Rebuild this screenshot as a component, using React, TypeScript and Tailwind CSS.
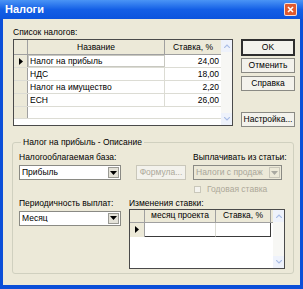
import React from "react";

const FONT = { fontFamily: '"Liberation Sans", Arial, sans-serif' };

// tiny XP-ish arrow used in dropdown buttons
function DropArrow({ disabled }: { disabled?: boolean }) {
  return (
    <svg width="7" height="4" viewBox="0 0 7 4">
      <path d="M0 0h7L3.5 4z" fill={disabled ? "#a8a8a0" : "#000"} />
    </svg>
  );
}

function Select({ value, disabled, width }: { value: string; disabled?: boolean; width: string }) {
  return (
    <div
      className={`flex items-center h-[15px] border border-[#8a8a84] ${width} ${
        disabled ? "bg-[#ece9d8] text-[#a8a69a]" : "bg-white text-black"
      }`}
    >
      <span className="flex-1 pl-[2px] leading-none truncate">{value}</span>
      <div
        className={`w-[11px] h-[11px] mr-[1px] flex items-center justify-center border ${
          disabled ? "border-[#c9c7ba] bg-[#ece9d8]" : "border-[#9a9a94] bg-[#e4e2d8]"
        }`}
      >
        <DropArrow disabled={disabled} />
      </div>
    </div>
  );
}

function Button({ label, primary, disabled, className }: { label: string; primary?: boolean; disabled?: boolean; className?: string }) {
  return (
    <div
      className={`flex items-center justify-center h-[15px] bg-[#f3f2ec] ${
        primary ? "border-2 border-[#2e2e2e]" : "border border-[#8a8a84]"
      } ${disabled ? "text-[#aca899] border-[#c9c7ba]" : "text-black"} ${className || ""}`}
    >
      {label}
    </div>
  );
}

function Scrollbar({ height }: { height: string }) {
  return (
    <div className={`w-[11px] ${height} bg-[#f7f7f4] flex flex-col justify-between`}>
      <div className="h-[12px] bg-[#eef2fb] flex items-center justify-center">
        <svg width="6" height="4" viewBox="0 0 6 4">
          <path d="M0 4L3 1L6 4" fill="none" stroke="#a9bde6" strokeWidth="1.2" />
        </svg>
      </div>
      <div className="h-[12px] bg-[#eef2fb] flex items-center justify-center">
        <svg width="6" height="4" viewBox="0 0 6 4">
          <path d="M0 0L3 3L6 0" fill="none" stroke="#a9bde6" strokeWidth="1.2" />
        </svg>
      </div>
    </div>
  );
}

function RowArrow() {
  return (
    <svg width="4" height="7" viewBox="0 0 4 7">
      <path d="M0 0L4 3.5L0 7z" fill="#000" />
    </svg>
  );
}

const taxes = [
  { name: "Налог на прибыль", rate: "24,00" },
  { name: "НДС", rate: "18,00" },
  { name: "Налог на имущество", rate: "2,20" },
  { name: "ЕСН", rate: "26,00" },
];

export default function App() {
  return (
    <div
      className="w-[303px] h-[289px] bg-[#0b4fd8] flex flex-col text-[8.5px] text-black overflow-hidden"
      style={FONT}
    >
      {/* Title bar */}
      <div className="h-[19px] flex items-center justify-between pl-[5px] pr-[6px] bg-gradient-to-b from-[#4a94f5] via-[#145fe6] to-[#0c54de]">
        <span className="text-white font-bold text-[11px]">Налоги</span>
        <div className="w-[13px] h-[13px] rounded-[2px] bg-[#e0592e] border border-white/80 flex items-center justify-center">
          <svg width="7" height="7" viewBox="0 0 7 7">
            <path d="M1 1L6 6M6 1L1 6" stroke="#fff" strokeWidth="1.6" />
          </svg>
        </div>
      </div>

      {/* Body */}
      <div className="flex-1 mx-[3px] mb-[4px] bg-[#ece9d8] pl-[9px] pt-[7px] flex flex-col">
        <div className="flex">
          {/* Tax list */}
          <div className="flex flex-col">
            <div className="h-[12px] leading-[12px] ml-[1px] mb-[1px]">Список налогов:</div>
            <div className="ml-[1px] flex w-[220px] h-[87px] border border-[#4a4a4a] bg-white">
              <div className="flex-1 flex flex-col">
                <div className="flex h-[15px] bg-[#ece9d8] border-b border-[#a0a0a0]">
                  <div className="w-[14px] border-r border-[#a0a0a0]" />
                  <div className="w-[137px] border-r border-[#a0a0a0] flex items-center justify-center">Название</div>
                  <div className="flex-1 flex items-center justify-center">Ставка, %</div>
                </div>
                {taxes.map((t, i) => (
                  <div key={t.name} className="flex h-[13px] border-b border-[#dcdcd4]">
                    <div className="w-[14px] bg-[#ece9d8] border-r border-[#a0a0a0] flex items-center justify-center">
                      {i === 0 && <RowArrow />}
                    </div>
                    <div
                      className={`w-[137px] border-r border-[#dcdcd4] pl-[2px] flex items-center ${
                        i === 0 ? "outline outline-1 outline-[#c8c8c0] -outline-offset-1" : ""
                      }`}
                    >
                      {t.name}
                    </div>
                    <div className="flex-1 pr-[2px] flex items-center justify-end">{t.rate}</div>
                  </div>
                ))}
                <div className="flex h-[12px] border-b border-[#dcdcd4]">
                  <div className="w-[14px] bg-[#ece9d8] border-r border-[#a0a0a0]" />
                  <div className="w-[137px]" />
                </div>
              </div>
              <Scrollbar height="h-[85px]" />
            </div>
          </div>

          {/* Buttons */}
          <div className="ml-[8px] w-[54px] pt-[13px] flex flex-col">
            <Button label="OK" primary className="h-[17px]" />
            <Button label="Отменить" className="mt-[2px]" />
            <Button label="Справка" className="mt-[3px]" />
            <Button label="Настройка..." className="mt-[21px]" />
          </div>
        </div>

        {/* Group box */}
        <fieldset className="mt-[10px] w-[282px] h-[137px] border border-[#d0d0bf] rounded-[3px] pl-[6px] pr-[6px] pb-[4px]">
          <legend className="px-[2px] ml-[2px] leading-[10px]">Налог на прибыль - Описание</legend>
          <div className="flex mt-[5px]">
            <div className="w-[102px] flex flex-col">
              <div className="h-[11px] leading-[11px] mb-[2px]">Налогооблагаемая база:</div>
              <Select value="Прибыль" width="w-[102px]" />
            </div>
            <div className="ml-[15px] pt-[13px]">
              <Button label="Формула..." disabled className="w-[50px]" />
            </div>
            <div className="ml-[7px] flex flex-col">
              <div className="h-[11px] leading-[11px] mb-[2px]">Выплачивать из статьи:</div>
              <Select value="Налоги с продаж" disabled width="w-[89px]" />
              <div className="flex items-center mt-[5px] ml-[1px] text-[#aca899]">
                <div className="w-[7px] h-[7px] border border-[#c9c7ba] bg-[#f4f3ee]" />
                <span className="ml-[6px] leading-none">Годовая ставка</span>
              </div>
            </div>
          </div>

          <div className="flex mt-[4px]">
            <div className="w-[102px] flex flex-col">
              <div className="h-[11px] leading-[11px] mb-[2px]">Периодичность выплат:</div>
              <Select value="Месяц" width="w-[102px]" />
            </div>
            <div className="ml-[8px] flex flex-col">
              <div className="h-[11px] leading-[11px]">Изменения ставки:</div>
              <div className="flex w-[156px] h-[60px] border border-[#4a4a4a] bg-white">
                <div className="flex-1 flex flex-col">
                  <div className="flex h-[13px] bg-[#ece9d8] border-b border-[#a0a0a0]">
                    <div className="w-[15px] border-r border-[#a0a0a0]" />
                    <div className="w-[71px] border-r border-[#a0a0a0] flex items-center justify-center">месяц проекта</div>
                    <div className="w-[55px] flex items-center justify-center border-r border-[#a0a0a0]">Ставка, %</div>
                  </div>
                  <div className="flex h-[14px]">
                    <div className="w-[15px] bg-[#ece9d8] border-r border-[#a0a0a0] flex items-center justify-center">
                      <RowArrow />
                    </div>
                    <div className="w-[71px] border-b border-[#3a3a3a] border-r border-r-[#dcdcd4]" />
                    <div className="w-[55px] border-b border-r border-[#3a3a3a]" />
                  </div>
                </div>
                <Scrollbar height="h-[58px]" />
              </div>
            </div>
          </div>
        </fieldset>
      </div>
    </div>
  );
}
